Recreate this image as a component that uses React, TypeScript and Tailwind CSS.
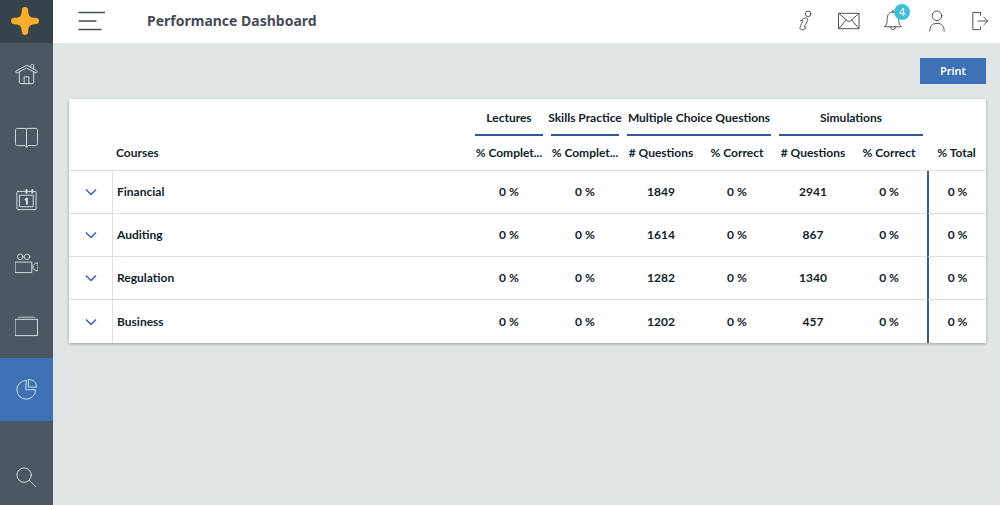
import clsx from "clsx";
import type { ReactNode } from "react";

interface Course {
	name: string;
	lectures: string;
	skills: string;
	mcqQuestions: number;
	mcqCorrect: string;
	simQuestions: number;
	simCorrect: string;
	total: string;
}

const courses: Course[] = [
	{ name: "Financial", lectures: "0 %", skills: "0 %", mcqQuestions: 1849, mcqCorrect: "0 %", simQuestions: 2941, simCorrect: "0 %", total: "0 %" },
	{ name: "Auditing", lectures: "0 %", skills: "0 %", mcqQuestions: 1614, mcqCorrect: "0 %", simQuestions: 867, simCorrect: "0 %", total: "0 %" },
	{ name: "Regulation", lectures: "0 %", skills: "0 %", mcqQuestions: 1282, mcqCorrect: "0 %", simQuestions: 1340, simCorrect: "0 %", total: "0 %" },
	{ name: "Business", lectures: "0 %", skills: "0 %", mcqQuestions: 1202, mcqCorrect: "0 %", simQuestions: 457, simCorrect: "0 %", total: "0 %" },
];

const groups = [
	{ name: "Lectures", span: 1 },
	{ name: "Skills Practice", span: 1 },
	{ name: "Multiple Choice Questions", span: 2 },
	{ name: "Simulations", span: 2 },
];

const columns = ["% Complet...", "% Complet...", "# Questions", "% Correct", "# Questions", "% Correct", "% Total"];

/**
 * Thin line icon, drawn on a 24px grid
 */
function Icon({ children }: { children: ReactNode }) {
	return (
		<svg
			width="23"
			height="23"
			viewBox="0 0 24 24"
			fill="none"
			stroke="currentColor"
			strokeLinecap="round"
			strokeLinejoin="round"
			aria-hidden="true"
		>
			{children}
		</svg>
	);
}

const navigation = [
	{
		name: "Home",
		icon: (
			<>
				<path d="M12 2.5L1.2 8.2C0.3 8.8 1 10.7 2.2 10.3L12 5.3L21.8 10.3C23 10.7 23.7 8.8 22.8 8.2Z" />
				<path d="M16.5 4.8V2.5C16.5 1.2 19.5 1.2 19.5 2.5V6.3" />
				<path d="M4.5 9.5V20C4.5 21 5 21.5 6 21.5H18C19 21.5 19.5 21 19.5 20V9.5" />
				<path d="M9.5 21.5V14.5H14.5V21.5" />
			</>
		),
	},
	{
		name: "Courses",
		icon: (
			<>
				<path d="M12 3.5L10.5 2.5H2.5C1.5 2.5 0.5 3 0.5 4.5V18.5C0.5 20 1.5 20.5 2.5 20.5H10.5L12 22L13.5 20.5H21.5C22.5 20.5 23.5 20 23.5 18.5V4.5C23.5 3 22.5 2.5 21.5 2.5H13.5Z" />
				<path d="M12 3V22" />
			</>
		),
	},
	{
		name: "Calendar",
		icon: (
			<>
				<rect x="2" y="2.5" width="20" height="19" rx="1" />
				<rect x="5" y="6.5" width="14" height="12" />
				<path d="M12 1V4M18 1V4" strokeWidth="2" />
				<path d="M11 11L12.5 10V15.5" strokeWidth="2" />
			</>
		),
	},
	{
		name: "Lectures",
		icon: (
			<>
				<circle cx="5.5" cy="5" r="2.9" />
				<circle cx="12.5" cy="5" r="2.9" />
				<rect x="0.5" y="10.5" width="17" height="11" />
				<path d="M19 14L21.5 11.5H24V19.5H21.5L19 17.5Z" />
			</>
		),
	},
	{
		name: "Flashcards",
		icon: (
			<>
				<rect x="0.5" y="4.5" width="23" height="17" />
				<path d="M3.5 2.5H20.5" opacity="0.6" />
				<path d="M5 1.5H19" opacity="0.3" />
			</>
		),
	},
	{
		name: "Performance",
		active: true,
		icon: (
			<>
				<path d="M11.5 2.5A9.8 9.8 0 1 0 21.5 12.2H11.5Z" />
				<path d="M14 1.5V9.5H22.5C22.5 4.5 19 1.5 14 1.5Z" />
			</>
		),
	},
];

const actions = [
	{
		name: "Information",
		icon: (
			<>
				<circle cx="15.8" cy="4" r="2.9" />
				<path d="M8.4 11C10.2 8.5 13.8 7.5 15 9C15.8 10.1 14.8 11.8 13.8 13.8C12.6 16.2 11 18.4 12.6 17.9C13.6 17.6 13.9 18.4 13.2 19.1C11 21.2 7.3 21.4 7.3 18.5C7.3 16.2 10.8 11.9 10.2 10.8C9.8 10.2 8.9 11.6 8.4 11Z" />
			</>
		),
	},
	{
		name: "Messages",
		icon: (
			<>
				<rect x="2" y="3.5" width="21" height="16" />
				<path d="M2 3.5L10.5 11C12 12.2 13 12.2 14.5 11L23 3.5M2 19.5L9.5 10.5M23 19.5L15.5 10.5" />
			</>
		),
	},
	{
		name: "Notifications",
		badge: 4,
		icon: (
			<>
				<path d="M12.5 0.5V2M12.5 2C8.5 2 6.5 5 6.5 9C6.5 14.5 5.5 16 3.8 16.8V17.5H21.2V16.8C19.5 16 18.5 14.5 18.5 9C18.5 5 16.5 2 12.5 2Z" />
				<path d="M10 18C10 21.4 15 21.4 15 18" />
			</>
		),
	},
	{
		name: "Account",
		icon: (
			<>
				<circle cx="12.5" cy="6" r="5" />
				<path d="M5 22C5 17 7 14 12.5 14S20 17 20 22" />
			</>
		),
	},
	{
		name: "Log out",
		icon: (
			<>
				<path d="M12 2.5H4V20.5H12V17.5M12 2.5V5.5" />
				<path d="M9.5 11.5H19.5M15.5 7.5L19.5 11.5L15.5 15.5" />
			</>
		),
	},
];

function Sidebar() {
	return (
		<aside className="flex w-[53px] shrink-0 flex-col bg-[#4b5861] text-[#d5e2e8]">
			<a href="#" aria-label="Start page" className="flex h-[43px] items-center justify-center bg-[#38424b] pr-[3px] pb-[2px]">
				<svg width="28" height="28" viewBox="0 0 28 28" aria-hidden="true">
					<path
						fill="#f8b02c"
						d="M14 0C16 0 17.2 1.4 17.2 3.4C17.2 8.6 19 10.8 24.4 10.8C26.6 10.8 28 12 28 14S26.6 17.2 24.4 17.2C19 17.2 17.2 19.4 17.2 24.6C17.2 26.6 16 28 14 28S10.8 26.6 10.8 24.6C10.8 19.4 9 17.2 3.6 17.2C1.4 17.2 0 16 0 14S1.4 10.8 3.6 10.8C9 10.8 10.8 8.6 10.8 3.4C10.8 1.4 12 0 14 0Z"
					/>
				</svg>
			</a>
			<nav>
				{navigation.map((item) => (
					<a
						key={item.name}
						href="#"
						aria-label={item.name}
						className={clsx("flex h-[63px] items-center justify-center", item.active && "bg-[#3e70b5]")}
					>
						<Icon>{item.icon}</Icon>
					</a>
				))}
			</nav>
			<button type="button" aria-label="Search" className="mt-auto flex h-14 items-center justify-center">
				<Icon>
					<circle cx="9.5" cy="9.5" r="7.5" />
					<path d="M15 15L21.5 21.5" />
				</Icon>
			</button>
		</aside>
	);
}

function Header() {
	return (
		<header className="flex h-[43px] items-center bg-white pr-[6px] pl-6 text-[#454c57]">
			<button type="button" aria-label="Toggle menu" className="pb-[2px]">
				<svg width="28" height="20" viewBox="0 0 28 20" stroke="currentColor" strokeWidth="1.5" strokeLinecap="round" aria-hidden="true">
					<path d="M2 1.5H28M2 10H19M2 18.5H24" />
				</svg>
			</button>
			<h1 className="ml-[42px] pb-[2px] font-['Noto_Sans',sans-serif] text-sm font-bold">Performance Dashboard</h1>
			<div className="ml-auto flex gap-4">
				{actions.map((action) => (
					<button key={action.name} type="button" aria-label={action.name} className="relative flex w-7 justify-center">
						<Icon>{action.icon}</Icon>
						{action.badge && (
							<span className="absolute -top-[6px] -right-1 flex size-4 items-center justify-center rounded-full bg-[#41bfd5] font-['Noto_Sans',sans-serif] text-[10px] leading-4 text-white">
								{action.badge}
							</span>
						)}
					</button>
				))}
			</div>
		</header>
	);
}

function CoursesTable() {
	return (
		<table className="w-full table-fixed border-separate border-spacing-0 bg-white text-center font-['Lato',sans-serif] text-[12px] leading-4 font-bold text-[#101d2b] shadow-[0_1px_3px_rgba(0,0,0,0.3)]">
			<colgroup>
				<col className="w-11" />
				<col />
				<col className="w-19" />
				<col className="w-19" />
				<col className="w-19" />
				<col className="w-19" />
				<col className="w-19" />
				<col className="w-19" />
				<col className="w-[59px]" />
			</colgroup>
			<thead>
				<tr>
					<td colSpan={2} />
					{groups.map((group) => (
						<th key={group.name} colSpan={group.span} className="px-1 font-bold">
							<div className="flex justify-center border-b-2 border-[#34599f] pt-[11px] pb-2 whitespace-nowrap">{group.name}</div>
						</th>
					))}
					<td />
				</tr>
				<tr className="h-[35px]">
					<td className="border-b border-[#dcdfe5]" />
					<th className="border-b border-[#dcdfe5] pl-[3px] text-left font-bold">Courses</th>
					{columns.map((column, i) => (
						<th key={i} className="border-b border-[#dcdfe5] font-bold whitespace-nowrap">
							{column}
						</th>
					))}
				</tr>
			</thead>
			<tbody>
				{courses.map((course) => (
					<tr key={course.name} className="group h-[43px]">
						<td className="border-r border-b border-[#dcdfe5] group-last:border-b-0">
							<button type="button" aria-label={`Expand ${course.name}`} className="block w-full">
								<svg
									width="12"
									height="8"
									viewBox="0 0 12 8"
									fill="none"
									stroke="#3464a8"
									strokeWidth="1.5"
									aria-hidden="true"
									className="mx-auto"
								>
									<path d="M1 1.5L6 6.5L11 1.5" />
								</svg>
							</button>
						</td>
						<th scope="row" className="border-b border-[#dcdfe5] pl-1 text-left font-bold group-last:border-b-0">
							{course.name}
						</th>
						{[course.lectures, course.skills, course.mcqQuestions, course.mcqCorrect, course.simQuestions, course.simCorrect].map(
							(value, i) => (
								<td key={i} className="border-b border-[#dcdfe5] group-last:border-b-0">
									{value}
								</td>
							),
						)}
						<td className="border-b border-l-2 border-b-[#dcdfe5] border-l-[#34599f] group-last:border-b-0">{course.total}</td>
					</tr>
				))}
			</tbody>
		</table>
	);
}

export default function App() {
	return (
		<div className="flex min-h-screen bg-[#e0e5e5]">
			<Sidebar />
			<div className="min-w-0 flex-1">
				<Header />
				<main className="pt-[15px] pr-[14px] pl-4">
					<div className="mb-[15px] flex justify-end">
						<button
							type="button"
							className="h-[26px] w-[66px] bg-[#3e70b5] font-['Noto_Sans',sans-serif] text-[11px] leading-4 font-semibold text-white"
						>
							Print
						</button>
					</div>
					<CoursesTable />
				</main>
			</div>
		</div>
	);
}
